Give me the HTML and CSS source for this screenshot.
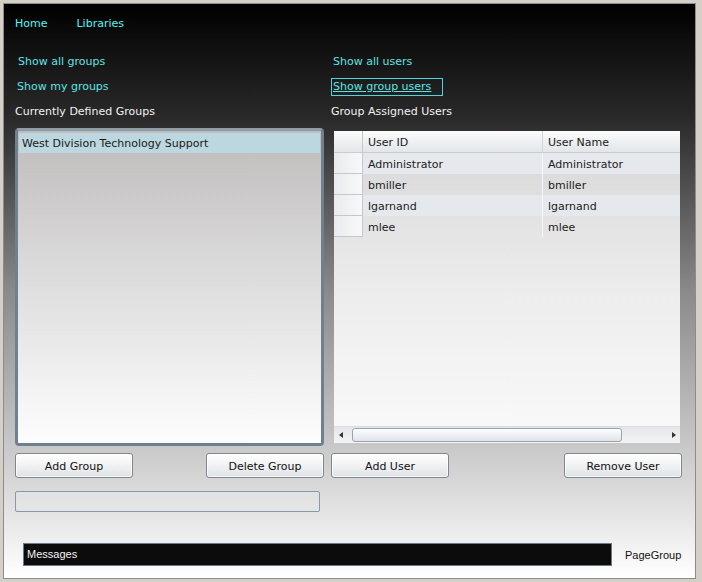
FILE: index.html
```html
<!DOCTYPE html>
<html>
<head>
<meta charset="utf-8">
<link rel="stylesheet" href="styles.css">
</head>
<body>
<div class="window">
  <nav class="nav">
    <a class="nav-link">Home</a>
    <a class="nav-link">Libraries</a>
  </nav>
  <div class="main">
    <section class="col col-left">
      <div class="row"><span class="link link-a">Show all groups</span></div>
      <div class="row"><span class="link link-b">Show my groups</span></div>
      <div class="row"><span class="label">Currently Defined Groups</span></div>
      <div class="listbox">
        <div class="list-item selected">West Division Technology Support</div>
      </div>
      <div class="btn-row">
        <button class="btn">Add Group</button>
        <button class="btn">Delete Group</button>
      </div>
      <div class="textbox"></div>
    </section>
    <section class="col col-right">
      <div class="row"><span class="link link-c">Show all users</span></div>
      <div class="row"><span class="link link-focus">Show group users</span></div>
      <div class="row"><span class="label">Group Assigned Users</span></div>
      <div class="grid">
        <div class="grid-head">
          <div class="rh"></div>
          <div class="cell c1">User ID</div>
          <div class="cell c2">User Name</div>
        </div>
        <div class="grid-row alt">
          <div class="rh"></div>
          <div class="cell c1">Administrator</div>
          <div class="cell c2">Administrator</div>
        </div>
        <div class="grid-row">
          <div class="rh"></div>
          <div class="cell c1">bmiller</div>
          <div class="cell c2">bmiller</div>
        </div>
        <div class="grid-row alt">
          <div class="rh"></div>
          <div class="cell c1">lgarnand</div>
          <div class="cell c2">lgarnand</div>
        </div>
        <div class="grid-row">
          <div class="rh"></div>
          <div class="cell c1">mlee</div>
          <div class="cell c2">mlee</div>
        </div>
        <div class="grid-fill"></div>
        <div class="hscroll">
          <span class="arrow arrow-l"></span>
          <span class="thumb"></span>
          <span class="track"></span>
          <span class="arrow arrow-r"></span>
        </div>
      </div>
      <div class="btn-row btn-row-right">
        <button class="btn">Add User</button>
        <button class="btn">Remove User</button>
      </div>
    </section>
  </div>
  <footer class="footer">
    <div class="messages">Messages</div>
    <div class="page-name">PageGroup</div>
  </footer>
</div>
</body>
</html>
```

FILE: styles.css
```css
* { box-sizing: border-box; }
html, body { margin: 0; padding: 0; }
body {
  background: #d4d0c8;
  width: 702px;
  height: 582px;
  padding: 3px 0 0 3px;
  font-family: "DejaVu Sans", sans-serif;
  font-size: 11px;
  overflow: hidden;
}
.window {
  width: 693px;
  height: 576px;
  border: 1px solid #8c8c8c;
  background: linear-gradient(#000000 0%, #2a2a2a 20%, #8a8a8a 50%, #cfcfcf 80%, #ffffff 100%);
  display: flex;
  flex-direction: column;
}
.nav {
  height: 45px;
  padding: 12px 0 0 11px;
  display: flex;
  gap: 29px;
}
.nav-link {
  color: #4ef6f6;
  line-height: 15px;
}
.main {
  display: grid;
  grid-template-columns: 309px 351px;
  column-gap: 7px;
  padding-left: 11px;
}
.col { display: flex; flex-direction: column; }
.row {
  height: 25px;
  display: flex;
  align-items: center;
}
.link { color: #5fe3e3; }
.link-a { margin-left: 3px; }
.link-b { margin-left: 2px; }
.link-c { margin-left: 2px; }
.link-focus {
  border: 1px solid #4fd6dc;
  padding: 1px 11px 1px 1px;
  text-decoration: underline;
  height: 18px;
  line-height: 14px;
}
.label { color: #f2f2f2; }

.listbox {
  margin-top: 4px;
  height: 318px;
  border: 3px solid #6f818e;
  border-top-color: #8d9ba6;
  border-radius: 4px;
  background: linear-gradient(#bebcbb, #d9d8d8 40%, #fdfdfd);
  padding: 2px 1px;
}
.list-item {
  height: 20px;
  line-height: 20px;
  padding: 1px 0 0 3px;
  color: #1a1a1a;
}
.list-item.selected { background: #bcd7df; }

.btn-row {
  display: flex;
  justify-content: space-between;
  margin-top: 7px;
}
.btn-row-right { margin-top: 10px; }
.btn {
  width: 118px;
  height: 25px;
  border: 1px solid #7f8790;
  border-radius: 3px;
  background: linear-gradient(#ffffff, #f2f3f4 45%, #dfe3e7);
  font-family: "DejaVu Sans", sans-serif;
  font-size: 11px;
  color: #111;
  padding: 1px 0 0;
  box-shadow: inset 0 0 0 1px rgba(255,255,255,0.7);
}
.textbox {
  margin-top: 13px;
  width: 305px;
  height: 21px;
  border: 1px solid #8898a6;
  border-radius: 2px;
  background: rgba(230,230,230,0.6);
}

.col-right .grid { margin-top: 7px; }
.grid {
  margin-left: 3px;
  width: 346px;
  height: 312px;
  background: linear-gradient(#d6d6d6, #ececec 50%, #fafafa);
  display: flex;
  flex-direction: column;
  overflow: hidden;
}
.grid-head, .grid-row {
  display: flex;
  flex: none;
}
.grid-head {
  height: 22px;
  background: linear-gradient(#fdfdfd, #eef0f2 50%, #e3e6e9);
  border-bottom: 1px solid #c9cdd1;
}
.grid-row { height: 21px; }
.grid-row.alt { background: #e5e9ed; }
.rh {
  width: 29px;
  flex: none;
  border-right: 1px solid #c4c8cc;
  border-bottom: 1px solid #c4c8cc;
  background: linear-gradient(90deg, #e9ebee, #f7f8f9);
}
.grid-head .rh { border-bottom: none; background: transparent; }
.cell {
  flex: none;
  padding: 1px 0 0 5px;
  line-height: 21px;
  color: #1b1b1b;
  white-space: nowrap;
}
.c1 { width: 180px; border-right: 1px solid #f4f6f8; }
.grid-head .c1 { border-right-color: #d2d6da; }
.c2 { width: 137px; }
.grid-fill { flex: 1; }
.hscroll {
  flex: none;
  height: 17px;
  display: flex;
  align-items: center;
  background: linear-gradient(#e4e6e9, #f3f4f5);
  border-top: 1px solid #dadde0;
  padding: 0 4px 0 5px;
}
.arrow {
  width: 0; height: 0;
  border-top: 3px solid transparent;
  border-bottom: 3px solid transparent;
  flex: none;
}
.arrow-l { border-right: 4px solid #333; margin-right: 9px; }
.arrow-r { border-left: 4px solid #333; margin-left: 0; }
.thumb {
  width: 270px;
  height: 14px;
  flex: none;
  border: 1px solid #9aa3ac;
  border-radius: 3px;
  background: linear-gradient(#ffffff, #eef1f4 50%, #dfe4e8);
}
.track { flex: 1; }

.footer {
  display: flex;
  align-items: center;
  margin-top: 31px;
  padding-left: 19px;
}
.messages {
  width: 589px;
  height: 23px;
  background: #0c0c0c;
  border: 1px solid #6b7b88;
  color: #f4f4f4;
  padding-left: 3px;
  line-height: 21px;
  font-family: "Liberation Sans", sans-serif;
  font-size: 11px;
}
.page-name {
  margin-left: 13px;
  color: #111;
  font-family: "Liberation Sans", sans-serif;
  font-size: 11px;
}
```
